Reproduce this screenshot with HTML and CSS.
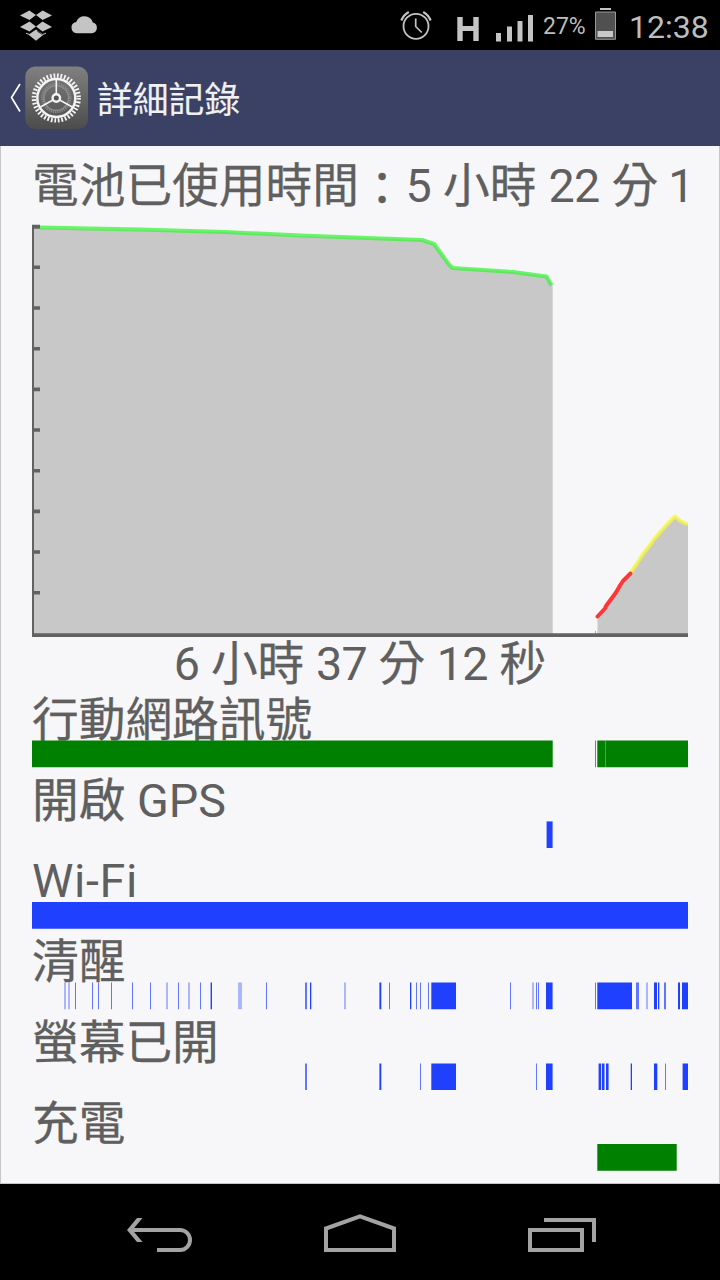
FILE: index.html
```html
<!DOCTYPE html>
<html lang="zh-Hant">
<head>
<meta charset="utf-8">
<title>詳細記錄</title>
<link rel="stylesheet" href="styles.css">
</head>
<body>
<div class="screen">
  <header class="status">
    <svg class="status-left" width="110" height="50" viewBox="0 0 110 50">
      <g fill="#c4c4c4">
        <path d="M29.300 10.500L36 15l-6.500 5-9.500-4.500zM42.700 10.500L36 15l6.500 5 9.500-4.500zM29.500 21.500L36 26.500l-6.500 5L20 27zM42.500 21.500L36 26.500l6.500 5L52 27zM36 29.500l7 5.500-7 5.700L29 35zM26 32.700l3.500 1.200 5-3.500v1.300l-5 3.300-3.500-1.300zM46 32.700l-3.500 1.200-5-3.500v1.300l5 3.300 3.500-1.300z"/>
        <path d="M76.700 33.300a5.700 5.700 0 0 1-.5-11.300a8.800 8.800 0 0 1 16.600.5a5.500 5.500 0 0 1-1 10.800z"/>
      </g>
    </svg>
    <div class="status-right">
      <svg width="142" height="50" viewBox="398 0 142 50">
        <g fill="none" stroke="#c4c4c4">
          <circle cx="416" cy="26.300" r="12.500" stroke-width="1.800"/>
          <path d="M415.700 18.500v8l6 6" stroke-width="1.700"/>
          <path d="M401.300 20.500a17 17 0 0 1 7.500-8.500M430.700 20.500a17 17 0 0 0-7.500-8.500" stroke-width="2.200"/>
        </g>
        <g fill="#c4c4c4">
          <path d="M457.300 17h5.400v9h10.600v-9h5.400v24h-5.400v-10h-10.600v10h-5.400z"/>
          <path d="M496 33h5v8.500h-5zM507 26.500h5v15h-5zM517.500 21h5v20.500h-5zM528 15h5v26.500h-5z"/>
        </g>
      </svg>
      <span class="percent">27%</span>
      <svg class="battery" width="22" height="50" viewBox="594 0 22 50">
        <path d="M600 8h11v2h-11z" fill="#c4c4c4"/>
        <path d="M595.500 12h20v27.300h-20z" fill="#505050" stroke="#999"/>
        <path d="M597.500 31h15.500v6h-15.500z" fill="#c8c8c8"/>
      </svg>
      <span class="clock">12:38</span>
    </div>
  </header>

  <div class="title-bar">
    <svg width="90" height="96" viewBox="0 50 90 96">
      <defs>
        <linearGradient id="tile" x1="0" y1="0" x2="0" y2="1">
          <stop offset="0" stop-color="#808080"/><stop offset="1" stop-color="#4c4c4c"/>
        </linearGradient>
      </defs>
      <path d="M20 84l-8.500 13.500L20 111.500" fill="none" stroke="#fff" stroke-width="1.700"/>
      <rect x="25.300" y="66.600" width="62.700" height="62.700" rx="10" fill="url(#tile)"/>
      <g fill="none" stroke="#f4f4f4">
        <circle cx="56.300" cy="98" r="22.400" stroke-width="4.400" stroke-dasharray="1.750 1.769"/>
        <circle cx="56.300" cy="98" r="19" stroke-width="2.500"/>
        <circle cx="56.300" cy="98" r="12.300" stroke="#8b8b8b" stroke-width="1.600"/>
        <circle cx="56.300" cy="98" r="14" stroke="#8b8b8b" stroke-width="2.500" stroke-dasharray="1.100 1.099"/>
        <path d="M56.300 79v15M53 100l-13.500 7.500M59.700 100l13.500 7.500" stroke-width="1.600"/>
        <circle cx="56.300" cy="98" r="3.700" stroke-width="2.400" fill="#555"/>
      </g>
    </svg>
    <h1 class="title">詳細記錄</h1>
  </div>

  <main class="history">
    <p class="duration">電池已使用時間<span class="colon">：</span><span class="num">5</span> 小時 <span class="num">22</span> 分 <span class="num final">1</span></p>
    <svg class="chart" width="656" height="418" viewBox="32 222 656 418">
      <path class="area" d="M33 228L225 232 300 236 422 240 434 244 452 268 513 272 547 276.500 552.700 286V635H33z"/>
      <path class="area" d="M597.500 617L605 608 616 592 623 580 630 573.500 643 554 652.700 540.700 660 532 675 516.500 681.700 521.700 688 524.300V635H597.500z"/>
      <path class="axis" d="M32 224.700h8v4h-6V633.300H688v3.700H32z"/>
      <path class="tick" d="M34 267.300h6M34 308h6M34 348.700h6M34 389.400h6M34 430h6M34 470.700h6M34 511.400h6M34 552h6M34 592.700h6"/>
      <path class="level good" d="M40 227.500L140 229.500 225 232 300 235.500 422 240 434 244 449 264.500 452.500 268 513 272 546.500 276.500 551.500 285.500"/>
      <path class="level mid" d="M630 573.500L636 565 643 554 652 542.500 653 540.500 660 532.500 667.500 524 675 516.500 681 521.500 688 524.300"/>
      <path class="level low" d="M597.500 616.500L605 608.500 606 606 616 592.500 620 585.500 623 581 630.500 573.500"/>
      <path d="M595 631h1v2h-1z" fill="#e88"/>
    </svg>
    <p class="span-time"><span class="num">6</span> 小時 <span class="num">37</span> 分 <span class="num">12</span> 秒</p>

    <section class="row">
      <h2 class="label">行動網路訊號</h2>
      <svg class="track green" viewBox="32 0 656 28"><path d="M32 .6H552.700V27.300H32zM597.300 .6H688V27.300H597.300z"/><path class="half" d="M595 .6h1v26.700h-1z"/><path d="M605 1h1v26h-1z" fill="#7d8474"/></svg>
    </section>
    <section class="row">
      <h2 class="label">開啟 <span class="latin">GPS</span></h2>
      <svg class="track blue" viewBox="32 0 656 28"><path d="M546.600 .4H552.600V27H546.600z"/></svg>
    </section>
    <section class="row short">
      <h2 class="label wide">Wi-Fi</h2>
      <svg class="track blue" viewBox="32 0 656 28"><path d="M32 0H688V26.700H32z"/></svg>
    </section>
    <section class="row">
      <h2 class="label">清醒</h2>
      <svg class="track blue" viewBox="32 0 656 28">
        <path d="M210.600 .6H212V27.300H210.600zM310 .6h1.300V27.300H310zM379.400 .6h1.900V27.300h-1.900zM410 .6h1.300V27.300H410zM431.300 .6H456V27.300H431.300zM546 .6h6.600V27.300H546zM597.300 .6H632V27.300H597.300zM654 .6h3V27.300h-3zM658 .6h1.300V27.300H658zM678 .6h2V27.300h-2zM682 .6h6V27.300h-6z"/>
        <path class="half" d="M75 .6h1v26.700h-1zM92 .6h1v26.700h-1zM98 .6h1v26.700h-1zM111 .6h1v26.700h-1zM132 .6h1v26.700h-1zM150 .6h1v26.700h-1zM178 .6h1v26.700h-1zM200 .6h1v26.700h-1zM266 .6h1v26.700h-1zM305 .6h2v26.700h-2zM389 .6h1v26.700h-1zM416 .6h1v26.700h-1zM420 .6h1v26.700h-1zM428 .6h1v26.700h-1zM510 .6h1v26.700h-1zM536 .6h1v26.700h-1zM538 .6h1v26.700h-1zM595 .6h1v26.700h-1zM636 .6h3v26.700h-3zM664 .6h2v26.700h-2z"/>
        <path class="faint" d="M64 .6h2v26.700h-2zM68 .6h2v26.700h-2zM166 .6h2v26.700h-2zM188 .6h2v26.700h-2zM238 .6h4v26.700h-4zM344 .6h2v26.700h-2zM532 .6h2v26.700h-2zM646 .6h2v26.700h-2z"/>
      </svg>
    </section>
    <section class="row">
      <h2 class="label">螢幕已開</h2>
      <svg class="track blue" viewBox="32 0 656 28">
        <path d="M379.400 .4h1.900V27h-1.900zM431.300 .4H456V27H431.300zM546 .4h6.600V27H546zM598.600 .4H601V27h-2.400zM601.800 .4h2.700V27h-2.700zM606 .4h2.600V27H606zM630.700 .4H632V27h-1.300zM654 .4h3.300V27H654zM682.600 .4H688V27h-5.400z"/>
        <path class="half" d="M305 .4h2V27h-2zM420 .4h1V27h-1zM536 .4h1V27h-1zM665 .4h1V27h-1z"/>
      </svg>
    </section>
    <section class="row last">
      <h2 class="label">充電</h2>
      <svg class="track green" viewBox="32 0 656 28"><path d="M597.300 0H676.700V26.700H597.300z"/></svg>
    </section>
  </main>

  <nav class="nav">
    <svg width="720" height="96" viewBox="0 1184 720 96" fill="none" stroke="#a3a3a3" stroke-width="4">
      <path d="M130 1230h50a10 10 0 0 1 0 20h-23"/>
      <path d="M137 1218h5.500L132.500 1230l10 12H137l-10-12z" fill="#a3a3a3" stroke="none"/>
      <path d="M326 1250v-21.500L360 1216.300l34 12.200V1250z"/>
      <path d="M530 1230h52v20h-52zM544 1220h50v22"/>
    </svg>
  </nav>
</div>
</body>
</html>
```
FILE: styles.css
```css
* { box-sizing: border-box; }
body {
  margin: 0;
  background: #000;
  font-family: Roboto, "Noto Sans CJK TC", sans-serif;
}
svg { display: block; flex: none; }
p, h1, h2 { margin: 0; font-weight: 400; }

.screen {
  width: 720px;
  height: 1280px;
  display: flex;
  flex-direction: column;
  overflow: hidden;
}

.status {
  height: 50px;
  display: flex;
  justify-content: space-between;
  background: #000;
  color: #bdbdbd;
}
.status-right {
  display: flex;
  align-items: center;
  width: 322px;
}
.percent { width: 54px; padding-left: 3px; font-size: 23px; line-height: 50px; padding-top: 3px; }
.clock { padding-left: 13px; font-size: 32px; line-height: 50px; padding-top: 3px; }

.title-bar {
  height: 96px;
  display: flex;
  align-items: center;
  gap: 7px;
  background: #3a4164;
}
.title {
  padding-top: 6px;
  color: #f0f0f2;
  font-size: 35.8px;
  line-height: 90px;
  white-space: nowrap;
  -webkit-text-stroke: .15px #f0f0f2;
}

.history {
  height: 1038px;
  padding: 0 31px;
  background: #f7f7f9;
  border: solid #c6c6c9;
  border-width: 0 1px 1px;
  color: #5f5f5f;
  font-size: 46.7px;
  -webkit-text-stroke: .3px #5f5f5f;
}
.num { letter-spacing: -.7px; -webkit-text-stroke: 0; }
.latin { -webkit-text-stroke: 0; }
.final { margin-left: -2px; }
.colon { position: relative; top: 3px; }
.duration { height: 76px; line-height: 80px; white-space: nowrap; word-spacing: .4px; }
.span-time { height: 47px; line-height: 48px; text-align: center; white-space: nowrap; }

.area { fill: #c8c8c8; }
.axis { fill: #626262; }
.tick { stroke: #626262; stroke-width: 3.6; }
.level { fill: none; stroke-width: 4; stroke-linejoin: round; stroke-linecap: round; }
.good { stroke: rgba(60, 242, 60, .75); stroke-linecap: butt; }
.mid { stroke: rgba(246, 246, 50, .72); stroke-linecap: butt; }
.low { stroke: #ff3636; }

.row { height: 81px; }
.label { height: 53px; font-size: 46.7px; line-height: 67px; white-space: nowrap; }
.wide { letter-spacing: .6px; line-height: 65px; -webkit-text-stroke: 0; }
.short { height: 80px; }
.track { width: 656px; height: 28px; }
.green { fill: #008000; }
.blue { fill: #2040ff; }
.half { fill-opacity: .7; }
.faint { fill-opacity: .35; }

.nav { height: 96px; background: #000; }
```
